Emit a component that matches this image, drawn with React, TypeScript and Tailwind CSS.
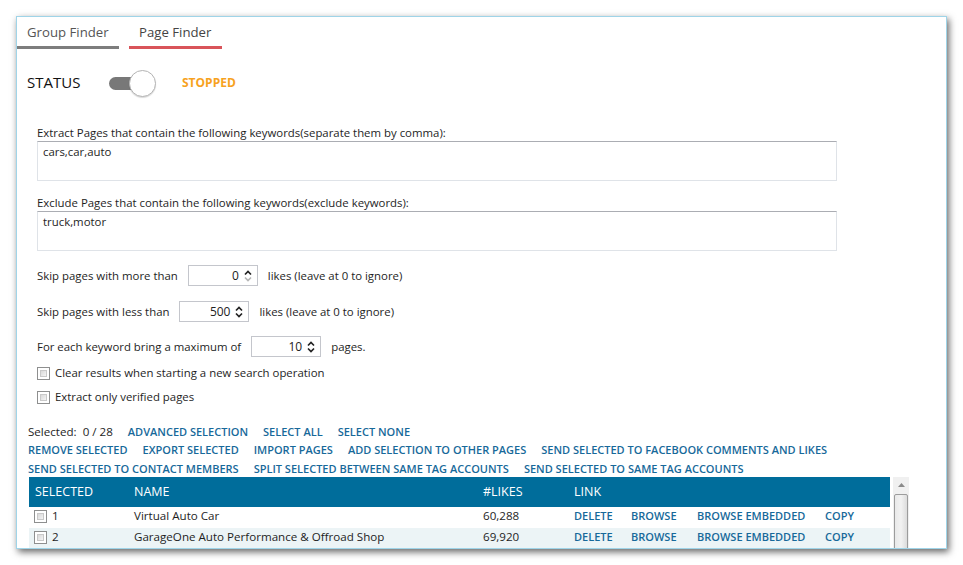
import React from 'react';

// Page Finder window – light desktop-style form with a results grid

const font = 'font-["Open_Sans",sans-serif]';

function Spinner({ minDisabled = false }: { minDisabled?: boolean }) {
  return (
    <svg width="8" height="14" viewBox="0 0 8 14" className="shrink-0">
      <path d="M1 5.5 L4 2.5 L7 5.5" fill="none" stroke="#222" strokeWidth="1.7" />
      <path d="M1 8.5 L4 11.5 L7 8.5" fill="none" stroke={minDisabled ? '#b5b5b5' : '#222'} strokeWidth="1.7" />
    </svg>
  );
}

function NumberBox({ value, minDisabled }: { value: string; minDisabled?: boolean }) {
  return (
    <div className="flex items-center justify-end gap-[5px] w-[70px] h-[21px] border border-[#c4c6cc] bg-white pr-[5px]">
      <span className="text-[12px] text-[#222]">{value}</span>
      <Spinner minDisabled={minDisabled} />
    </div>
  );
}

function CheckBox() {
  return (
    <div className="w-[13px] h-[13px] border border-[#8e8f8f] bg-white p-[2px] shrink-0">
      <div className="w-full h-full bg-gradient-to-br from-[#d9d9d9] to-[#f4f4f4] border border-[#c9c9c9]" />
    </div>
  );
}

function Link({ children }: { children: React.ReactNode }) {
  return <span className="text-[11px] leading-[16px] font-semibold text-[#17699a] whitespace-nowrap">{children}</span>;
}

const rows = [
  { n: '1', name: 'Virtual Auto Car', likes: '60,288' },
  { n: '2', name: 'GarageOne Auto Performance & Offroad Shop', likes: '69,920' },
];

export default function App() {
  return (
    <div className={`w-[963px] h-[565px] bg-white overflow-hidden ${font} text-[#1e1e1e]`}>
      <div className="ml-[16px] mt-[16px] w-[931px] h-[533px] border border-[#9fd4e8] bg-white overflow-hidden shadow-[2px_3px_7px_rgba(0,0,0,0.6)]">
        {/* Tabs */}
        <div className="flex gap-[10px]">
          <div className="pt-[5px] pb-[4px] px-[10px] border-b-[3px] border-[#7d7d7d] w-[102px] whitespace-nowrap">
            <span className="block text-[13.2px] leading-[20px] text-[#555]">Group Finder</span>
          </div>
          <div className="pt-[5px] pb-[4px] px-[10px] border-b-[3px] border-[#d9545a] w-[93px] whitespace-nowrap">
            <span className="block text-[13.2px] leading-[20px] text-[#444]">Page Finder</span>
          </div>
        </div>

        {/* Status */}
        <div className="flex items-center h-[26px] mt-[21px] ml-[10px]">
          <span className="w-[82px] text-[15px] leading-[20px] pb-[3px] text-[#111]">STATUS</span>
          <div className="relative w-[47px] h-[26px] flex items-center">
            <div className="w-[30px] h-[13px] rounded-full bg-[#787878]" />
            <div className="absolute left-[20px] top-0 w-[27px] h-[27px] rounded-full bg-white border border-[#b4b4b4] shadow-[0_1px_1px_rgba(0,0,0,0.15)]" />
          </div>
          <span className="ml-[26px] text-[12px] font-bold text-[#f7a21e]">STOPPED</span>
        </div>

        {/* Keywords */}
        <div className="ml-[20px] mt-[29px] flex flex-col text-[11.4px]">
          <span className="leading-[16px]">Extract Pages that contain the following keywords(separate them by comma):</span>
          <div className="w-[800px] h-[40px] border border-[#dfe3e8] border-t-[#abadb3] px-[5px] py-[2px] leading-[16px]">cars,car,auto</div>

          <span className="mt-[14px] leading-[16px]">Exclude Pages that contain the following keywords(exclude keywords):</span>
          <div className="w-[800px] h-[40px] border border-[#dfe3e8] border-t-[#abadb3] px-[5px] py-[2px] leading-[16px]">truck,motor</div>

          <div className="mt-[14px] flex items-center gap-[10px] h-[21px]">
            <span>Skip pages with more than</span>
            <NumberBox value="0" minDisabled />
            <span>likes (leave at 0 to ignore)</span>
          </div>
          <div className="mt-[15px] flex items-center gap-[10px] h-[21px]">
            <span>Skip pages with less than</span>
            <NumberBox value="500" />
            <span>likes (leave at 0 to ignore)</span>
          </div>
          <div className="mt-[14px] flex items-center gap-[10px] h-[21px]">
            <span>For each keyword bring a maximum of</span>
            <NumberBox value="10" />
            <span>pages.</span>
          </div>

          <div className="mt-[8px] flex items-center gap-[5px] h-[16px]">
            <CheckBox />
            <span>Clear results when starting a new search operation</span>
          </div>
          <div className="mt-[8px] flex items-center gap-[5px] h-[16px]">
            <CheckBox />
            <span>Extract only verified pages</span>
          </div>
        </div>

        {/* Actions */}
        <div className="ml-[11px] mt-[19px] flex flex-col gap-[2px]">
          <div className="flex items-center gap-[15px] h-[16px]">
            <span className="text-[11.6px]">Selected:&nbsp; 0 / 28</span>
            <Link>ADVANCED SELECTION</Link>
            <Link>SELECT ALL</Link>
            <Link>SELECT NONE</Link>
          </div>
          <div className="flex items-center gap-[15px] h-[16px]">
            <Link>REMOVE SELECTED</Link>
            <Link>EXPORT SELECTED</Link>
            <Link>IMPORT PAGES</Link>
            <Link>ADD SELECTION TO OTHER PAGES</Link>
            <Link>SEND SELECTED TO FACEBOOK COMMENTS AND LIKES</Link>
          </div>
          <div className="flex items-center gap-[15px] h-[16px] mt-[1px]">
            <Link>SEND SELECTED TO CONTACT MEMBERS</Link>
            <Link>SPLIT SELECTED BETWEEN SAME TAG ACCOUNTS</Link>
            <Link>SEND SELECTED TO SAME TAG ACCOUNTS</Link>
          </div>
        </div>

        {/* Grid */}
        <div className="ml-[12px] flex gap-[3px]">
          <div className="w-[861px] flex flex-col">
            <div className="grid grid-cols-[105px_349px_91px_1fr] items-center h-[30px] bg-[#006d9b] text-white text-[12.5px]">
              <span className="pl-[6px]">SELECTED</span>
              <span>NAME</span>
              <span>#LIKES</span>
              <span>LINK</span>
            </div>
            {rows.map((r, i) => (
              <div
                key={r.n}
                className={`grid grid-cols-[105px_349px_91px_1fr] items-center h-[21px] pb-[3px] leading-[16px] text-[11.6px] ${i % 2 ? 'bg-[#ecf4f6]' : 'bg-white'}`}
              >
                <span className="pl-[5px] flex items-center gap-[5px]">
                  <CheckBox />
                  {r.n}
                </span>
                <span>{r.name}</span>
                <span>{r.likes}</span>
                <span className="flex items-center">
                  <span className="w-[57px] flex"><Link>DELETE</Link></span>
                  <span className="w-[66px] flex"><Link>BROWSE</Link></span>
                  <span className="w-[128px] flex"><Link>BROWSE EMBEDDED</Link></span>
                  <span className="flex"><Link>COPY</Link></span>
                </span>
              </div>
            ))}
          </div>

          {/* Scrollbar */}
          <div className="w-[16px] flex flex-col bg-[#f0f0f0]">
            <div className="h-[16px] flex items-center justify-center">
              <svg width="7" height="4" viewBox="0 0 7 4">
                <path d="M0 4 L3.5 0 L7 4 Z" fill="#8a8a8a" />
              </svg>
            </div>
            <div className="mt-[1px] mx-[1px] h-[80px] border border-[#9c9c9c] rounded-[2px] bg-gradient-to-r from-[#e9e9e9] via-[#f2f2f2] to-[#dcdcdc]" />
          </div>
        </div>
      </div>
    </div>
  );
}
